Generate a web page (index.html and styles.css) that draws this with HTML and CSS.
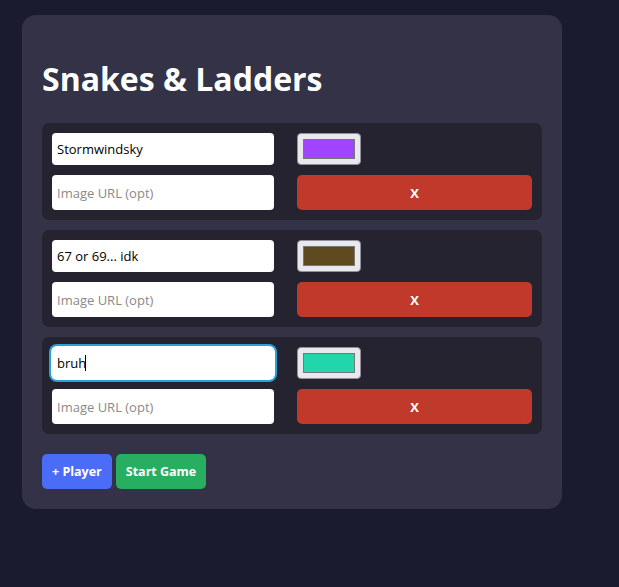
FILE: index.html
```html
<!DOCTYPE html>
<html lang="en">
  <head>
    <meta charset="UTF-8" />
    <meta name="viewport" content="width=device-width, initial-scale=1.0" />
    <title>Snakes &amp; Ladders</title>

    <link rel="stylesheet" href="styles.css">
  </head>
  <body>
    <div id="setup">
      <h1>Snakes &amp; Ladders</h1>

      <div id="players">
        <div class="player">
          <input class="name" type="text" value="Stormwindsky" />
          <div class="swatch"><span style="background: #a044ff"></span></div>
          <input class="url" type="text" placeholder="Image URL (opt)" />
          <button class="remove">X</button>
        </div>
        <div class="player">
          <input class="name" type="text" value="67 or 69... idk" />
          <div class="swatch"><span style="background: #5e4a1e"></span></div>
          <input class="url" type="text" placeholder="Image URL (opt)" />
          <button class="remove">X</button>
        </div>
        <div class="player">
          <div class="name-wrap">
            <input class="name focused" type="text" value="bruh" />
            <span class="caret"></span>
          </div>
          <div class="swatch"><span style="background: #20d6aa"></span></div>
          <input class="url" type="text" placeholder="Image URL (opt)" />
          <button class="remove">X</button>
        </div>
      </div>

      <div id="actions">
        <button class="btn blue">+ Player</button>
        <button class="btn green">Start Game</button>
      </div>
    </div>
  </body>
</html>
```

FILE: styles.css
```css
body {
  margin: 0;
  padding: 15px 22px;
  background-color: #1b1b2f;
  font-family: "Open Sans", sans-serif;
}
#setup {
  width: 540px;
  box-sizing: border-box;
  padding: 20px;
  background-color: #333246;
  border-radius: 14px;
}
h1 {
  color: white;
  font-size: 32px;
  margin: 22px 0 23px;
}
#players {
  display: flex;
  flex-direction: column;
  gap: 10px;
}
.player {
  background-color: #24232f;
  border-radius: 7px;
  padding: 10px;
  display: grid;
  grid-template-columns: 222px 235px;
  column-gap: 23px;
  row-gap: 10px;
}
input {
  font-family: "Open Sans", sans-serif;
  font-size: 13px;
  color: black;
  border: none;
  border-radius: 4px;
  padding: 0 5px;
  outline: none;
  box-sizing: border-box;
  width: 100%;
}
input::placeholder {
  color: #8a8a8a;
}
.name {
  height: 32px;
}
.url {
  height: 35px;
}
.name-wrap {
  position: relative;
}
.focused {
  box-shadow: 0 0 0 1px #ffffff, 0 0 0 3px #2aa0d8;
  border-radius: 5px;
}
.caret {
  position: absolute;
  left: 33px;
  top: 8px;
  width: 1px;
  height: 16px;
  background: black;
}
.swatch {
  width: 64px;
  height: 32px;
  box-sizing: border-box;
  background-color: #e9e9ed;
  border: 1px solid #8f8f9d;
  border-radius: 4px;
  padding: 5px 5px;
  display: flex;
}
.swatch span {
  flex: 1;
  border: 1px solid #777;
}
button {
  font-family: "Open Sans", sans-serif;
  font-weight: bold;
  font-size: 13px;
  color: white;
  border: none;
  border-radius: 5px;
  cursor: pointer;
}
.remove {
  height: 35px;
  background-color: #c0392b;
}
#actions {
  margin-top: 20px;
  display: flex;
  gap: 4px;
}
.btn {
  height: 35px;
  padding: 0 10px;
  font-size: 12.5px;
}
.blue {
  background-color: #4a6cf7;
}
.green {
  background-color: #27ae60;
}
```
